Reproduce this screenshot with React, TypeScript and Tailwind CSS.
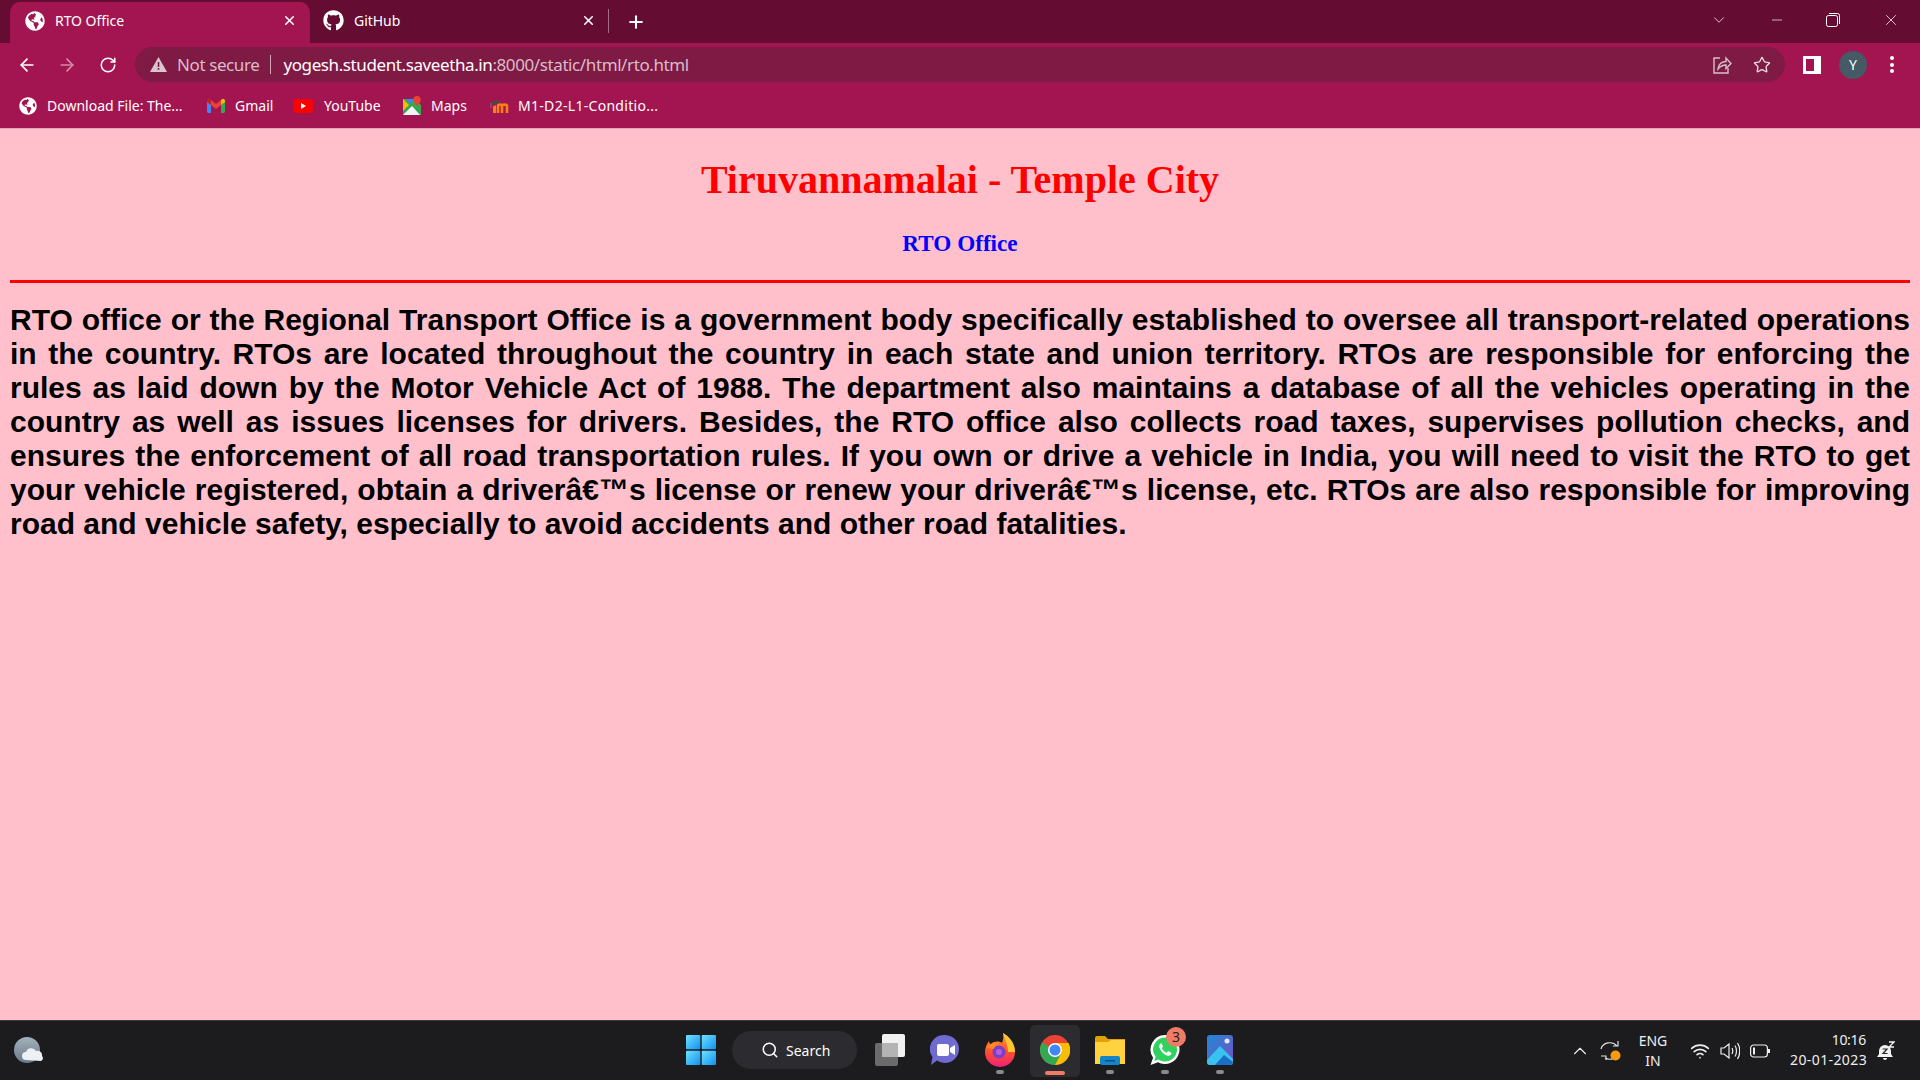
import React from "react";
import { ArrowLeft, ArrowRight, RotateCw, Star, Plus, X, Minus, ChevronDown, ChevronUp, Search, Wifi } from "lucide-react";
import { FaGithub, FaGlobeAmericas } from "react-icons/fa";

const ui = "font-['Noto_Sans','Open_Sans',sans-serif]";

function Globe({ size = 20 }: { size?: number }) {
  return <FaGlobeAmericas size={size} color="#fff" />;
}
function Warn() {
  return (
    <svg width="17" height="15" viewBox="0 0 17 15">
      <path d="M8.500 0L17 15H0z" fill="#d9c6ce" />
      <rect x="7.700" y="5" width="1.600" height="5" fill="#7f1a44" />
      <rect x="7.700" y="11" width="1.600" height="1.800" fill="#7f1a44" />
    </svg>
  );
}
function Gmail() {
  return (
    <svg width="18" height="14" viewBox="0 0 18 14">
      <path d="M0 2v10.500C0 13.300.7 14 1.500 14H4V6z" fill="#4285f4" />
      <path d="M18 2v10.500c0 .8-.7 1.500-1.500 1.500H14V6z" fill="#34a853" />
      <path d="M4 6v8h0L4 6l5 4 5-4V1L9 5 4 1z" fill="#ea4335" />
      <path d="M14 1v5l4-3V2c0-2-2-2.500-3-1.800z" fill="#fbbc04" />
      <path d="M4 1v5L0 3V2c0-2 2-2.500 3-1.800z" fill="#c5221f" />
    </svg>
  );
}
function YouTube() {
  return (
    <svg width="20" height="14" viewBox="0 0 20 14">
      <rect width="20" height="14" rx="4" fill="#f00" />
      <path d="M8 4l5 3-5 3z" fill="#fff" />
    </svg>
  );
}
function Maps() {
  return (
    <svg width="18" height="20" viewBox="0 0 18 20">
      <path d="M0 3h12l6 6v10H0z" fill="#34a853" />
      <path d="M0 19l9-9 8 9z" fill="#f4f4f4" />
      <path d="M0 3l6 6-6 6z" fill="#fbbc04" />
      <path d="M3 3h8L7 8z" fill="#4285f4" />
      <path d="M14 0a3.800 3.800 0 0 1 3.800 3.800C17.800 6.500 14 10 14 10s-3.800-3.500-3.800-6.200A3.800 3.800 0 0 1 14 0z" fill="#ea4335" />
    </svg>
  );
}
function Moodle() {
  return (
    <svg width="20" height="16" viewBox="0 0 20 16">
      <path d="M0 5l6-3 5 2-6 3z" fill="#4a4a4a" />
      <path d="M1 5v5" stroke="#777" strokeWidth="1" />
      <path d="M3 15V8.500L6 7v8z" fill="#f98012" />
      <path d="M8 15V8c0-2 4-2 4 0v7M12 15V8c0-2 5-2 5 0v7" fill="none" stroke="#f98012" strokeWidth="2.600" />
    </svg>
  );
}
function ShareIcon() {
  return (
    <svg width="20" height="20" viewBox="0 0 20 20" fill="none" stroke="#d4c2ca" strokeWidth="1.400">
      <path d="M8 3H2v15h14v-5" />
      <path d="M6 14c.5-5 4-7.500 8-7.500V3l5 5.500-5 5V10c-3.500 0-6 1.500-8 4z" />
    </svg>
  );
}
function SidePanel() {
  return (
    <div className="w-[18px] h-[18px] bg-white flex p-[3px] pr-0">
      <div className="w-[8px] h-full bg-[#a01550]" />
    </div>
  );
}
function Restore() {
  return (
    <svg width="14" height="14" viewBox="0 0 14 14" fill="none" stroke="#fff" strokeWidth="1">
      <rect x=".5" y="2.500" width="11" height="11" rx="2" />
      <path d="M3 .5h8.500a2 2 0 0 1 2 2V11" />
    </svg>
  );
}
function WinLogo() {
  return (
    <svg width="30" height="30" viewBox="0 0 30 30">
      <defs>
        <linearGradient id="w" x1="0" y1="0" x2="1" y2="1">
          <stop offset="0" stopColor="#6fe3ff" />
          <stop offset="1" stopColor="#0f90f0" />
        </linearGradient>
      </defs>
      <rect width="14.300" height="14.300" rx="1" fill="url(#w)" />
      <rect x="15.700" width="14.300" height="14.300" rx="1" fill="url(#w)" />
      <rect y="15.700" width="14.300" height="14.300" rx="1" fill="url(#w)" />
      <rect x="15.700" y="15.700" width="14.300" height="14.300" rx="1" fill="url(#w)" />
    </svg>
  );
}
function TaskView() {
  return (
    <svg width="30" height="32" viewBox="0 0 30 32">
      <rect x="0" y="9" width="23" height="23" rx="2" fill="#6b6b6b" />
      <rect x="7" y="0" width="23" height="23" rx="2" fill="#f1f1f1" />
      <rect x="7" y="9" width="16" height="14" fill="#b4b4b4" />
    </svg>
  );
}
function Meet() {
  return (
    <svg width="30" height="32" viewBox="0 0 30 32">
      <path d="M15 1a14 14 0 1 1-8 25.500L1 31l1.500-8A14 14 0 0 1 15 1z" fill="#6f6bd0" />
      <rect x="7" y="10" width="12" height="12" rx="2" fill="#fff" />
      <path d="M20 14l5-3v10l-5-3z" fill="#fff" />
    </svg>
  );
}
function Firefox() {
  return (
    <svg width="30" height="34" viewBox="0 0 30 34">
      <defs>
        <linearGradient id="ff" x1="0" y1="0" x2="0" y2="1">
          <stop offset="0" stopColor="#ffa52e" />
          <stop offset=".55" stopColor="#ff4f2c" />
          <stop offset="1" stopColor="#f0207a" />
        </linearGradient>
      </defs>
      <path d="M18 0c7 4 12 11 12 19a15 15 0 0 1-30 0c0-5 2-8 4-11 0 2 1 3 2 3 3-3 8-3 11-1 1-3 2-6 1-10z" fill="url(#ff)" />
      <path d="M18 0c7 4 12 11 12 19h-7c0-7-3-13-5-19z" fill="#ffc72e" />
      <circle cx="14" cy="19" r="6.500" fill="#7a3fc4" />
      <circle cx="14" cy="19" r="3" fill="#b65be0" />
      <path d="M2 15c3-5 8-6 13-4-3 0-6 2-6 5z" fill="#ff8a2c" />
    </svg>
  );
}
function Chrome() {
  return (
    <svg width="30" height="30" viewBox="0 0 30 30">
      <circle cx="15" cy="15" r="15" fill="#ea4335" />
      <path d="M15 15L2 7.500A15 15 0 0 0 15 30l7.500-13z" fill="#34a853" />
      <path d="M15 8h13.500A15 15 0 0 1 15 30l7-13z" fill="#fbbc04" />
      <circle cx="15" cy="15" r="7" fill="#fff" />
      <circle cx="15" cy="15" r="5.500" fill="#4285f4" />
    </svg>
  );
}
function Folder() {
  return (
    <svg width="30" height="30" viewBox="0 0 30 30">
      <path d="M0 3a2 2 0 0 1 2-2h8l3 3h17v6H0z" fill="#e3a008" />
      <path d="M0 7h13l3-2h14v24H0z" fill="#ffd23f" />
      <rect x="5" y="21" width="20" height="9" rx="2" fill="#1485c8" />
      <rect x="10" y="25" width="10" height="1.500" fill="#0a4f80" />
    </svg>
  );
}
function WhatsApp() {
  return (
    <div className="relative w-[30px] h-[32px]">
      <svg width="30" height="32" viewBox="0 0 30 32">
        <path d="M15 1a14.500 14.500 0 1 1-7 27.200L.5 31l2.600-7.300A14.500 14.500 0 0 1 15 1z" fill="#fff" />
        <path d="M15 3.500a12 12 0 1 1-6.500 22.100l-4.200 1.500 1.400-4.200A12 12 0 0 1 15 3.500z" fill="#2fd15f" />
        <path d="M10.500 9.500c-1.500 1-1.700 3-.5 5.500 1.500 3 4 5.500 7 6.500 2 .6 4 0 4.500-2 .1-.5-.1-.8-.5-1l-2.500-1.200c-.5-.2-.8 0-1.100.4l-.8 1c-2.200-.8-3.900-2.500-4.800-4.700l.9-.9c.3-.3.4-.7.2-1.100L11.600 9.700c-.3-.4-.7-.4-1.100-.2z" fill="#fff" />
      </svg>
      <div className={`absolute -top-[7px] -right-[6px] w-[20px] h-[20px] rounded-full bg-[#f07c66] text-[#222] text-[14px] leading-[20px] text-center ${ui}`}>3</div>
    </div>
  );
}
function Photos() {
  return (
    <svg width="26" height="30" viewBox="0 0 26 30">
      <defs>
        <linearGradient id="ph" x1="0" y1="0" x2="1" y2="1">
          <stop offset="0" stopColor="#1e88d8" />
          <stop offset="1" stopColor="#7a4fc0" />
        </linearGradient>
      </defs>
      <rect width="26" height="30" rx="3" fill="url(#ph)" />
      <circle cx="20" cy="6" r="2.500" fill="#dfeaff" />
      <path d="M0 25L13 11l13 13v3a3 3 0 0 1-3 3H3a3 3 0 0 1-3-3z" fill="#39c2ee" />
      <path d="M8 30l9-10 9 7v0a3 3 0 0 1-3 3z" fill="#1a6fc4" />
    </svg>
  );
}
function Sync() {
  return (
    <svg width="22" height="22" viewBox="0 0 22 22" fill="none" stroke="#ddd" strokeWidth="1.200">
      <path d="M1 9a9 8 0 0 1 16-3M13 6h5V1" />
      <path d="M17 16a9 8 0 0 1-12 2M1 16h5v4" />
      <circle cx="15.500" cy="15.500" r="5" fill="#f89c0e" stroke="none" />
    </svg>
  );
}
function Volume() {
  return (
    <svg width="20" height="18" viewBox="0 0 20 18" fill="none" stroke="#eee" strokeWidth="1.200">
      <path d="M1 6h3l5-4v14l-5-4H1z" />
      <path d="M12 6c1 2 1 4 0 6M15 3.500c2 3 2 8 0 11M17.500 1c3 4.500 3 11.500 0 16" />
    </svg>
  );
}
function Battery() {
  return (
    <svg width="20" height="14" viewBox="0 0 20 14" fill="none" stroke="#eee" strokeWidth="1.200">
      <rect x=".6" y="1" width="16.800" height="12" rx="3" />
      <rect x="18" y="5" width="2" height="4" fill="#eee" stroke="none" />
      <rect x="3" y="3.500" width="2" height="7" fill="#eee" stroke="none" />
    </svg>
  );
}
function SnoozeBell() {
  return (
    <svg width="18" height="20" viewBox="0 0 18 20">
      <path d="M8 4a6 6 0 0 0-6 6v3l-2 3h16l-2-3v-3a6 6 0 0 0-6-6z" fill="#f2f2f2" />
      <path d="M6 17h4a2 2 0 0 1-4 0z" fill="#f2f2f2" />
      <path d="M5.500 8h4.500l-4 4.500h4.500" fill="none" stroke="#222" strokeWidth="1.200" />
      <path d="M12 1h5l-5 5h5" fill="none" stroke="#f2f2f2" strokeWidth="1.300" />
    </svg>
  );
}
function Weather() {
  return (
    <svg width="30" height="28" viewBox="0 0 30 28">
      <defs>
        <linearGradient id="wx" x1="0" y1="0" x2="0" y2="1">
          <stop offset="0" stopColor="#a4b1bd" />
          <stop offset="1" stopColor="#6a7a88" />
        </linearGradient>
      </defs>
      <circle cx="13" cy="13" r="13" fill="url(#wx)" />
      <path d="M12 23a4 4 0 0 1 0-8 5.500 5.500 0 0 1 10-1 4.500 4.500 0 0 1 6 5 3 3 0 0 1-1 5z" fill="#eef1f4" />
    </svg>
  );
}

export default function App() {
  return (
    <div className="w-[1920px] h-[1080px] overflow-hidden flex flex-col bg-[#ffc0cb]">
      <header className={`shrink-0 ${ui} text-white`}>
        <div className="h-[43px] bg-[#650c33] flex items-end">
          <div className="ml-[10px] w-[300px] h-[41px] bg-[#a31550] rounded-t-[10px] flex items-center pl-[15px] pb-[4px]">
            <Globe />
            <span className="ml-[10px] text-[14px] tracking-[-0.05px]">RTO Office</span>
            <X size={15} strokeWidth={2.5} className="ml-auto mr-[13px]" />
          </div>
          <div className="w-[299px] h-[41px] flex items-center pl-[13px] pb-[4px] relative">
            <FaGithub size={21} color="#fff" />
            <span className="ml-[10px] text-[14px] tracking-[-0.05px]">GitHub</span>
            <X size={15} strokeWidth={2.5} className="ml-auto mr-[12px]" />
            <div className="w-px h-[24px] bg-[#a0708a]" />
          </div>
          <Plus size={20} strokeWidth={2.5} className="ml-[17px] mb-[11px]" />
          <div className="ml-auto h-[43px] flex items-center pb-[4px]">
            <ChevronDown size={18} strokeWidth={1} className="mr-[41px]" />
            <Minus size={16} strokeWidth={1} className="mr-[41px]" />
            <Restore />
            <X size={18} strokeWidth={1} className="ml-[42px] mr-[20px]" />
          </div>
        </div>
        <div className="h-[43px] bg-[#a31550] flex items-center">
          <ArrowLeft size={20} className="ml-[17px]" />
          <ArrowRight size={20} className="ml-[20px] text-[#d48aa8]" />
          <RotateCw size={18} className="ml-[22px]" />
          <div className="ml-[18px] w-[1650px] h-[35px] rounded-full bg-[#7f1a44] flex items-center pl-[15px]">
            <Warn />
            <span className="ml-[10px] text-[17px] tracking-[-0.4px] text-[#d9bcc9]">Not secure</span>
            <div className="ml-[11px] w-px h-[19px] bg-[#cfa9ba]" />
            <span className="ml-[12px] text-[17px] tracking-[-0.4px] text-white">yogesh.student.saveetha.in<span className="text-[#d9bcc9]">:8000/static/html/rto.html</span></span>
            <div className="ml-auto flex items-center">
              <ShareIcon />
              <Star size={18} strokeWidth={1.8} className="ml-[21px] mr-[14px] text-[#e8dbe0]" />
            </div>
          </div>
          <div className="ml-[18px]"><SidePanel /></div>
          <div className="ml-[18px] w-[28px] h-[28px] rounded-full bg-[#455a64] flex items-center justify-center text-[14px]">Y</div>
          <div className="ml-[23px] flex flex-col gap-[2.5px]">
            <div className="w-[4px] h-[4px] rounded-full bg-white" />
            <div className="w-[4px] h-[4px] rounded-full bg-white" />
            <div className="w-[4px] h-[4px] rounded-full bg-white" />
          </div>
        </div>
        <div className="h-[43px] bg-[#a31550] border-b border-[#d9a8bf] flex items-center pb-[3px] text-[14px]">
          <div className="ml-[19px]"><Globe size={18} /></div>
          <span className="ml-[10px] w-[138px] whitespace-nowrap">Download File: The...</span>
          <div className="ml-[22px]"><Gmail /></div>
          <span className="ml-[10px] w-[38px]">Gmail</span>
          <div className="ml-[20px]"><YouTube /></div>
          <span className="ml-[11px] w-[57px]">YouTube</span>
          <div className="ml-[22px]"><Maps /></div>
          <span className="ml-[10px] w-[37px]">Maps</span>
          <div className="ml-[22px]"><Moodle /></div>
          <span className="ml-[8px] whitespace-nowrap tracking-[0.3px]">M1-D2-L1-Conditio...</span>
        </div>
      </header>

      <main className="flex-1 min-h-0 bg-[#ffc0cb] px-[10px]">
        <h1 className="text-center font-['Liberation_Serif',serif] font-bold text-[40px] leading-[46px] text-[#ff0000] mt-[28px]">Tiruvannamalai - Temple City</h1>
        <h2 className="text-center font-['Liberation_Serif',serif] font-bold text-[23.2px] leading-[27px] text-[#0000ff] mt-[27px]">RTO Office</h2>
        <hr className="border-0 h-[3px] bg-[#ff0000] mt-[23px]" />
        <p className="mt-[20px] font-['Liberation_Sans',Arial,sans-serif] font-bold text-[30px] leading-[34px] text-black text-justify">
          RTO office or the Regional Transport Office is a government body specifically established to oversee all transport-related operations in the country. RTOs are located throughout the country in each state and union territory. RTOs are responsible for enforcing the rules as laid down by the Motor Vehicle Act of 1988. The department also maintains a database of all the vehicles operating in the country as well as issues licenses for drivers. Besides, the RTO office also collects road taxes, supervises pollution checks, and ensures the enforcement of all road transportation rules. If you own or drive a vehicle in India, you will need to visit the RTO to get your vehicle registered, obtain a driver{"\u00e2\u20ac\u2122"}s license or renew your driver{"\u00e2\u20ac\u2122"}s license, etc. RTOs are also responsible for improving road and vehicle safety, especially to avoid accidents and other road fatalities.
        </p>
      </main>

      <footer className={`shrink-0 h-[60px] bg-[#1c1c1f] border-t border-[#3a3a3d] flex items-center text-white ${ui} relative`}>
        <div className="ml-[14px]"><Weather /></div>
        <div className="ml-[642px] -mt-[2px]"><WinLogo /></div>
        <div className="ml-[16px] w-[125px] h-[38px] rounded-full bg-[#2c2c30] flex items-center pl-[29px] text-[14px] -mt-[1px]">
          <Search size={18} />
          <span className="ml-[7px]">Search</span>
        </div>
        <div className="ml-[18px] -mt-[2px]"><TaskView /></div>
        <div className="ml-[25px] -mt-[2px]"><Meet /></div>
        <div className="ml-[25px] relative -mt-[2px]">
          <Firefox />
          <div className="absolute -bottom-[7px] left-[11px] w-[8px] h-[4px] rounded-full bg-[#8a8a8a]" />
        </div>
        <div className="ml-[15px] w-[50px] h-[52px] rounded-[5px] bg-[#2c2c30] flex items-center justify-center relative">
          <div className="-mt-[2px] h-[30px]"><Chrome /></div>
          <div className="absolute bottom-[2px] left-[15px] w-[20px] h-[4px] rounded-full bg-[#f07c66]" />
        </div>
        <div className="ml-[15px] relative -mt-[2px]">
          <Folder />
          <div className="absolute -bottom-[9px] left-[11px] w-[8px] h-[4px] rounded-full bg-[#8a8a8a]" />
        </div>
        <div className="ml-[25px] relative -mt-[2px]">
          <WhatsApp />
          <div className="absolute -bottom-[8px] left-[11px] w-[8px] h-[4px] rounded-full bg-[#8a8a8a]" />
        </div>
        <div className="ml-[27px] relative -mt-[2px]">
          <Photos />
          <div className="absolute -bottom-[9px] left-[9px] w-[8px] h-[4px] rounded-full bg-[#8a8a8a]" />
        </div>
        <div className="ml-auto flex items-center">
          <ChevronUp size={22} strokeWidth={1.2} color="#eee" />
          <div className="ml-[9px]"><Sync /></div>
          <div className="ml-[15px] w-[32px] text-center text-[14px] leading-[20px] text-[#eee]">ENG<br />IN</div>
          <Wifi size={20} className="ml-[21px] text-[#eee]" />
          <div className="ml-[10px]"><Volume /></div>
          <div className="ml-[10px]"><Battery /></div>
          <div className="ml-[20px] w-[76px] text-right text-[14px] leading-[20px] text-[#eee] -mt-[2px] whitespace-nowrap">
            <div className="tracking-[-0.3px]">10:16</div>
            <div className="tracking-[0.4px]">20-01-2023</div>
          </div>
          <div className="ml-[11px] mr-[25px]"><SnoozeBell /></div>
        </div>
      </footer>
    </div>
  );
}
